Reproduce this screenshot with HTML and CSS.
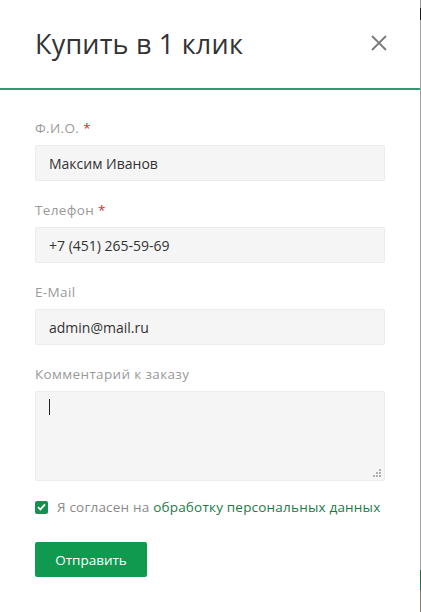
FILE: index.html
```html
<!DOCTYPE html>
<html lang="ru">
<head>
<meta charset="utf-8">
<title>Купить в 1 клик</title>
<link rel="stylesheet" href="styles.css">
</head>
<body>
<div class="page">
  <div class="modal">
    <div class="modal-header">
      <h1 class="modal-title">Купить в 1 клик</h1>
      <button class="close" aria-label="Закрыть">
        <svg width="16" height="16" viewBox="0 0 16 16"><path d="M1 1 L15 15 M15 1 L1 15" stroke="#7a7a7a" stroke-width="1.8" fill="none"/></svg>
      </button>
    </div>
    <form class="modal-body">
      <div class="group">
        <label class="label">Ф.И.О. <span class="req">*</span></label>
        <div class="field">Максим Иванов</div>
      </div>
      <div class="group">
        <label class="label">Телефон <span class="req">*</span></label>
        <div class="field">+7 (451) 265-59-69</div>
      </div>
      <div class="group">
        <label class="label">E-Mail</label>
        <div class="field">admin@mail.ru</div>
      </div>
      <div class="group">
        <label class="label">Комментарий к заказу</label>
        <div class="field area"><span class="caret"></span><span class="grip"></span></div>
      </div>
      <div class="agree">
        <span class="check">
          <svg width="9" height="8" viewBox="0 0 9 8"><path d="M1 4.2 L3.4 6.4 L8 1.4" stroke="#fff" stroke-width="1.8" fill="none"/></svg>
        </span>
        <span class="agree-text">Я согласен на <a class="link" href="#">обработку персональных данных</a></span>
      </div>
      <button class="submit" type="button">Отправить</button>
    </form>
  </div>
  <div class="edge"></div>
</div>
</body>
</html>
```
FILE: styles.css
```css
html, body {
  margin: 0;
  padding: 0;
  background: #fff;
}
body {
  font-family: "Open Sans", "Noto Sans", sans-serif;
}
.page {
  display: flex;
  width: 421px;
  height: 612px;
}
.modal {
  width: 420px;
  height: 612px;
  background: #fff;
}
.edge {
  width: 1px;
  height: 612px;
  background: linear-gradient(#9a9a9a 0, #9a9a9a 8px, #1a1a1a 8px, #1a1a1a 20px, #a0a0a0 20px, #a0a0a0 570px, #1f6e4a 570px, #1f6e4a 590px, #8a7a70 590px);
}
.modal-header {
  height: 90px;
  border-bottom: 2px solid #2e9a6e;
  display: flex;
  align-items: center;
  justify-content: space-between;
  padding: 0 33px 0 35px;
  box-sizing: border-box;
}
.modal-title {
  margin: 0 0 2px 0;
  font-size: 27px;
  font-weight: 400;
  color: #333;
  letter-spacing: 0.2px;
}
.close {
  border: 0;
  background: none;
  padding: 0;
  width: 16px;
  height: 16px;
  margin-bottom: 2px;
}
.close svg { display: block; }
.modal-body {
  padding: 29px 35px 0 35px;
  display: flex;
  flex-direction: column;
}
.group {
  display: flex;
  flex-direction: column;
  margin-bottom: 20px;
}
.label {
  font-size: 13.5px;
  line-height: 18px;
  color: #9a9a9a;
  margin-bottom: 8px;
  letter-spacing: 0.35px;
}
.req { color: #d0312d; }
.field {
  height: 36px;
  box-sizing: border-box;
  background: #f5f5f5;
  border: 1px solid #ececec;
  border-radius: 2px;
  padding: 0 13px;
  font-size: 14px;
  color: #333;
  display: flex;
  align-items: center;
}
.field.area {
  height: 90px;
  align-items: flex-start;
  padding-top: 7px;
  position: relative;
}
.caret {
  display: inline-block;
  width: 1px;
  height: 16px;
  background: #222;
}
.grip {
  position: absolute;
  right: 3px;
  bottom: 3px;
  width: 8px;
  height: 8px;
  background:
    radial-gradient(circle, #aaa 0.7px, transparent 0.8px) 6px 0 / 2px 2px no-repeat,
    radial-gradient(circle, #aaa 0.7px, transparent 0.8px) 3px 3px / 2px 2px no-repeat,
    radial-gradient(circle, #aaa 0.7px, transparent 0.8px) 6px 3px / 2px 2px no-repeat,
    radial-gradient(circle, #aaa 0.7px, transparent 0.8px) 0 6px / 2px 2px no-repeat,
    radial-gradient(circle, #aaa 0.7px, transparent 0.8px) 3px 6px / 2px 2px no-repeat,
    radial-gradient(circle, #aaa 0.7px, transparent 0.8px) 6px 6px / 2px 2px no-repeat;
}
.agree {
  display: flex;
  align-items: center;
  margin-top: -3px;
  font-size: 13.5px;
  letter-spacing: 0.2px;
  color: #8a8a8a;
}
.check {
  width: 13px;
  height: 13px;
  border-radius: 2px;
  background: #14904f;
  display: flex;
  align-items: center;
  justify-content: center;
  margin-right: 9px;
}
.check svg { display: block; }
.link {
  color: #1b7b48;
  text-decoration: none;
}
.submit {
  margin-top: 26px;
  width: 112px;
  height: 35px;
  border: 0;
  border-radius: 2px;
  background: #0f9a50;
  color: #fff;
  font-family: inherit;
  font-size: 13.5px;
  padding: 0;
}
```
